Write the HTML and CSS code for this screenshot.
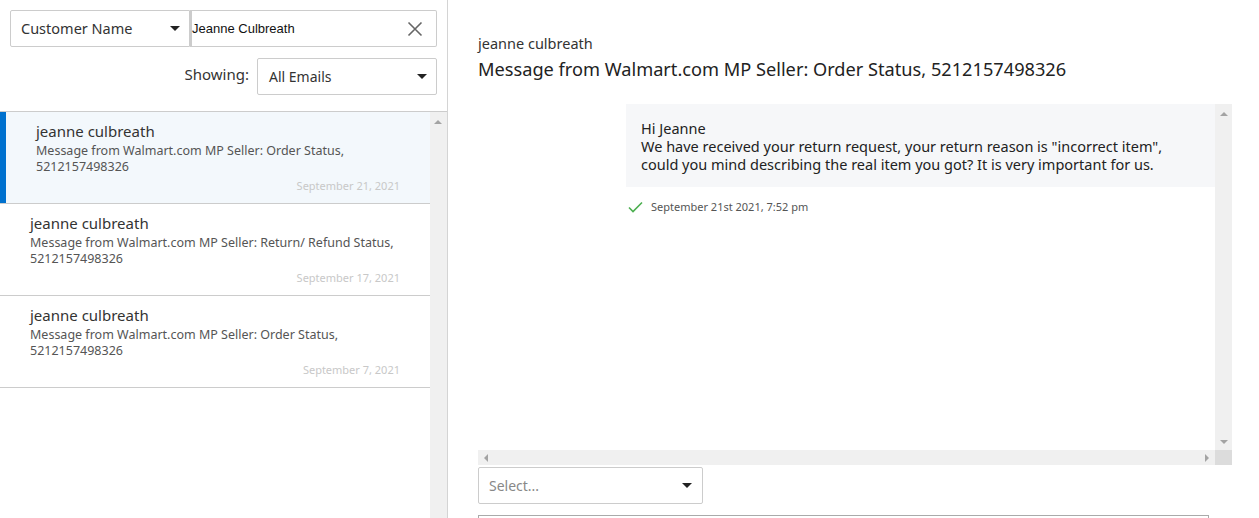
FILE: index.html
```html
<!DOCTYPE html>
<html>
<head>
<meta charset="utf-8">
<link rel="stylesheet" href="styles.css">
</head>
<body>
<div class="app">
  <aside class="sidebar">
    <div class="filters">
      <div class="filter-row">
        <div class="select select-field">
          <span>Customer Name</span>
          <span class="caret"></span>
        </div>
        <div class="search">
          <span class="search-text">Jeanne Culbreath</span>
          <svg class="clear" width="16" height="16" viewBox="0 0 16 16"><path d="M1.5 1.5L14.5 14.5M14.5 1.5L1.5 14.5" stroke="#666" stroke-width="1.6" fill="none"/></svg>
        </div>
      </div>
      <div class="show-row">
        <span class="show-label">Showing:</span>
        <div class="select select-show">
          <span>All Emails</span>
          <span class="caret"></span>
        </div>
      </div>
    </div>
    <div class="list-wrap">
      <ul class="list">
        <li class="item active">
          <div class="item-name">jeanne culbreath</div>
          <div class="item-subject">Message from Walmart.com MP Seller: Order Status, 5212157498326</div>
          <div class="item-date">September 21, 2021</div>
        </li>
        <li class="item">
          <div class="item-name">jeanne culbreath</div>
          <div class="item-subject">Message from Walmart.com MP Seller: Return/ Refund Status, 5212157498326</div>
          <div class="item-date">September 17, 2021</div>
        </li>
        <li class="item">
          <div class="item-name">jeanne culbreath</div>
          <div class="item-subject">Message from Walmart.com MP Seller: Order Status, 5212157498326</div>
          <div class="item-date">September 7, 2021</div>
        </li>
      </ul>
      <div class="vscroll">
        <span class="arrow-up"></span>
      </div>
    </div>
  </aside>
  <main class="detail">
    <div class="detail-name">jeanne culbreath</div>
    <h1 class="detail-title">Message from Walmart.com MP Seller: Order Status, 5212157498326</h1>
    <div class="thread">
      <div class="thread-body">
        <div class="bubble">
          <p>Hi Jeanne</p>
          <p>We have received your return request, your return reason is "incorrect item", could you mind describing the real item you got? It is very important for us.</p>
        </div>
        <div class="sent">
          <svg width="15" height="12" viewBox="0 0 15 12"><path d="M1 6.5L5 10.5L14 1.5" stroke="#4caf50" stroke-width="1.6" fill="none"/></svg>
          <span>September 21st 2021, 7:52 pm</span>
        </div>
      </div>
      <div class="thread-vscroll">
        <span class="arrow-up"></span>
        <span class="arrow-down"></span>
      </div>
      <div class="thread-hscroll">
        <span class="arrow-left"></span>
        <span class="arrow-right"></span>
      </div>
      <div class="thread-corner"></div>
    </div>
    <div class="select select-template">
      <span>Select...</span>
      <span class="caret"></span>
    </div>
    <div class="reply-box"></div>
  </main>
</div>
</body>
</html>
```

FILE: styles.css
```css
* { box-sizing: border-box; }
html, body { margin: 0; padding: 0; }
body {
  font-family: "Noto Sans", "Open Sans", sans-serif;
  color: #333;
  background: #fff;
  width: 1259px;
  height: 518px;
  overflow: hidden;
}
.app { display: flex; height: 518px; overflow: hidden; }

.sidebar {
  width: 448px;
  border-right: 1px solid #d4d4d4;
  display: flex;
  flex-direction: column;
}
.filters { padding: 10px 10px 0 10px; }
.filter-row { display: flex; height: 37px; }
.select {
  display: flex;
  align-items: center;
  justify-content: space-between;
  border: 1px solid #ccc;
  border-radius: 2px;
  background: #fff;
  font-size: 14px;
  color: #333;
}
.caret {
  width: 0; height: 0;
  border-left: 5px solid transparent;
  border-right: 5px solid transparent;
  border-top: 5px solid #222;
}
.select-field { width: 180px; padding: 0 9px 2px 10px; border-radius: 2px 0 0 2px; font-size: 14.5px; }
.select-field .caret { margin-top: 2px; }
.search {
  flex: 1;
  display: flex;
  align-items: center;
  justify-content: space-between;
  border: 1px solid #ccc;
  border-left: 2px solid #ccc;
  border-radius: 0 2px 2px 0;
  padding: 0 13px 0 0;
}
.search-text { font-family: "Liberation Sans", Arial, sans-serif; font-size: 13px; color: #111; }
.show-row { display: flex; justify-content: flex-end; align-items: center; margin-top: 11px; gap: 8px; }
.show-label { font-size: 15px; color: #333; margin-top: -6px; }
.select-show { width: 180px; height: 37px; padding: 0 9px 0 11px; }

.list-wrap {
  margin-top: 16px;
  border-top: 1px solid #ccc;
  flex: 1;
  display: flex;
  min-height: 0;
}
.list { list-style: none; margin: 0; padding: 0; width: 430px; }
.item {
  height: 92px;
  border-bottom: 1px solid #ccc;
  padding: 9px 30px 0 30px;
  position: relative;
}
.item.active {
  background: #f3f8fc;
  padding-left: 36px;
}
.item.active::before {
  content: "";
  position: absolute;
  left: 0; top: 0; bottom: 0;
  width: 6px;
  background: #0071ce;
}
.item-name { font-size: 15px; line-height: 20px; color: #333; }
.item-subject { font-size: 12.5px; line-height: 16px; color: #555; margin-top: 2px; }
.item-date { font-size: 11px; color: #c8c8c8; text-align: right; margin-top: 4px; line-height: 14px; }

.vscroll {
  width: 17px;
  background: #f0f0f0;
  position: relative;
}
.arrow-up, .arrow-down, .arrow-left, .arrow-right {
  position: absolute;
  width: 0; height: 0;
}
.vscroll .arrow-up { top: 8px; left: 4px; border-left: 4px solid transparent; border-right: 4px solid transparent; border-bottom: 4px solid #a3a3a3; }

.detail { flex: 1; padding: 33px 0 0 30px; min-width: 0; }
.detail-name { font-size: 14.5px; line-height: 20px; color: #333; }
.detail-title { font-size: 18.2px; font-weight: normal; line-height: 26px; margin: 3px 0 0 0; color: #222; }
.thread {
  margin-top: 22px;
  width: 754px;
  height: 361px;
  display: grid;
  grid-template-columns: 737px 17px;
  grid-template-rows: 346px 15px;
}
.thread-body { padding-left: 148px; overflow: hidden; }
.bubble {
  background: #f6f7f9;
  height: 83px;
  padding: 15px 30px 0 15px;
  font-size: 14.5px;
  line-height: 18px;
  color: #222;
}
.bubble p { margin: 0; }
.sent {
  display: flex;
  align-items: center;
  gap: 8px;
  margin-top: 12px;
  padding-left: 2px;
  font-size: 11px;
  color: #555;
}
.thread-vscroll { background: #f0f0f0; position: relative; }
.thread-vscroll .arrow-up { top: 8px; left: 5px; border-left: 4px solid transparent; border-right: 4px solid transparent; border-bottom: 4px solid #a3a3a3; }
.thread-vscroll .arrow-down { bottom: 6px; left: 5px; border-left: 4px solid transparent; border-right: 4px solid transparent; border-top: 4px solid #a3a3a3; }
.thread-hscroll { background: #f0f0f0; position: relative; }
.thread-hscroll .arrow-left { top: 4px; left: 6px; border-top: 4px solid transparent; border-bottom: 4px solid transparent; border-right: 4px solid #a3a3a3; }
.thread-hscroll .arrow-right { top: 4px; right: 6px; border-top: 4px solid transparent; border-bottom: 4px solid transparent; border-left: 4px solid #a3a3a3; }
.thread-corner { background: #dcdcdc; }

.select-template {
  margin-top: 2px;
  width: 225px;
  height: 37px;
  padding: 0 10px 0 10px;
  color: #888;
}
.reply-box {
  margin-top: 11px;
  width: 731px;
  height: 40px;
  border: 1px solid #aaa;
}
```
